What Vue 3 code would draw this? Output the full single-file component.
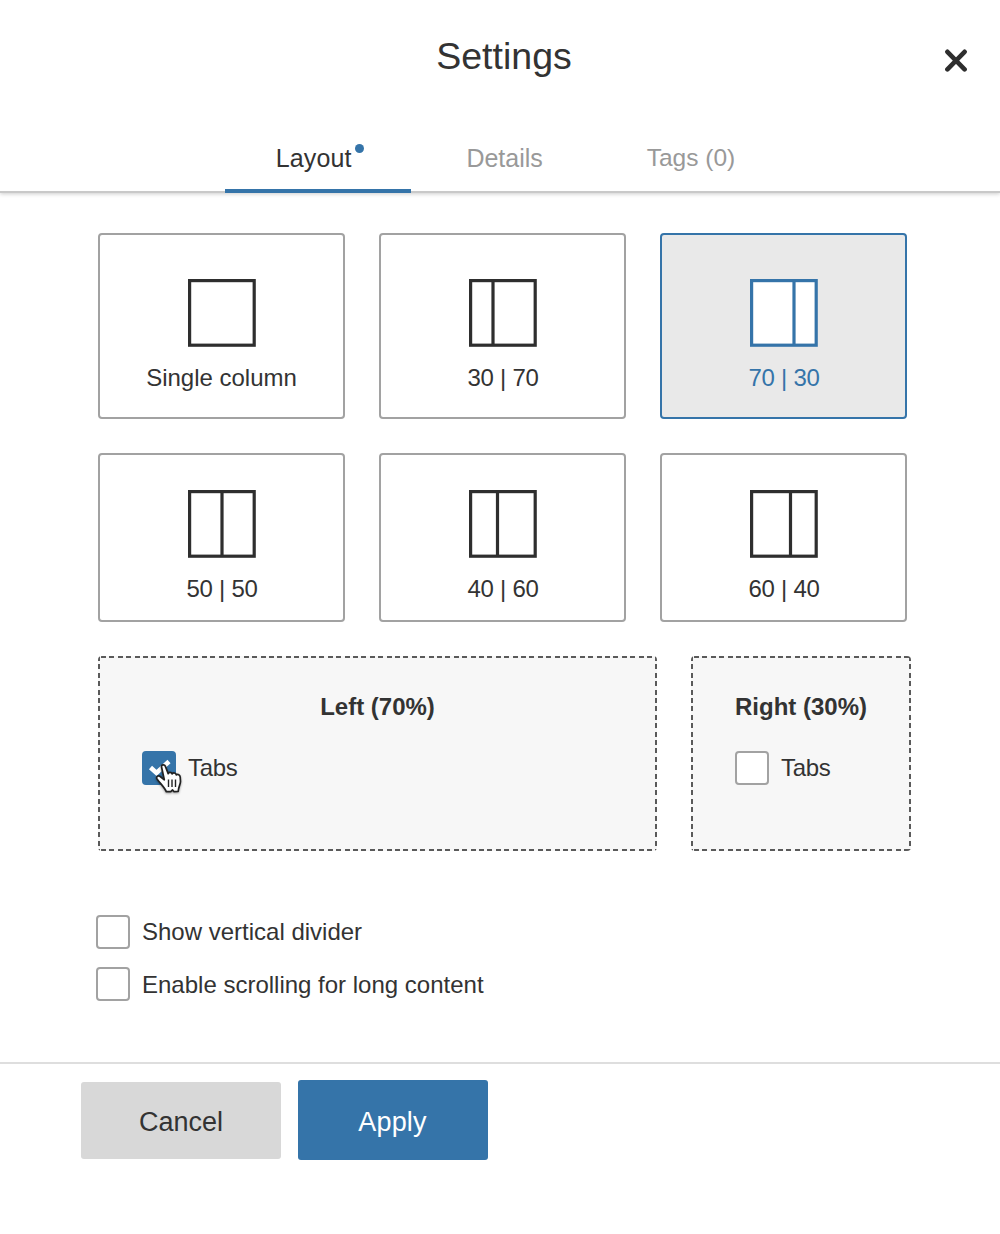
<script setup>
import { ref } from 'vue'

const tabs = ['Layout', 'Details', 'Tags (0)']
const activeTab = ref('Layout')

const layouts = [
  { label: 'Single column', divider: null },
  { label: '30 | 70', divider: 24 },
  { label: '70 | 30', divider: 44 },
  { label: '50 | 50', divider: 34 },
  { label: '40 | 60', divider: 28.5 },
  { label: '60 | 40', divider: 40.5 },
]
const selected = ref('70 | 30')

const leftTabs = ref(true)
const rightTabs = ref(false)
const verticalDivider = ref(false)
const scrolling = ref(false)
</script>

<template>
  <div class="dialog">
    <header class="header">
      <h1 class="title">Settings</h1>
      <button class="close" aria-label="Close">
        <svg width="24" height="24" viewBox="0 0 24 24">
          <path d="M3.4 2.8 20.6 20.4M20.6 2.8 3.4 20.4" stroke="#2e2e2e" stroke-width="4.6" stroke-linecap="round" stroke-linejoin="round" />
        </svg>
      </button>
      <nav class="tabs">
        <button
          v-for="tab in tabs"
          :key="tab"
          class="tab"
          :class="{ active: tab === activeTab }"
          @click="activeTab = tab"
        >
          <span class="tab-label">{{ tab }}<i v-if="tab === 'Layout'" class="dot"></i></span>
        </button>
      </nav>
    </header>

    <main class="body">
      <div class="grid">
        <button
          v-for="item in layouts"
          :key="item.label"
          class="card"
          :class="{ selected: item.label === selected }"
          @click="selected = item.label"
        >
          <svg class="glyph" width="68" height="68" viewBox="0 0 68 68">
            <rect x="1.6" y="1.6" width="64.6" height="64.6" fill="#fff" stroke="currentColor" stroke-width="3.2" />
            <path v-if="item.divider" :d="`M${item.divider} 2V66`" stroke="currentColor" stroke-width="3.2" />
          </svg>
          <span class="card-label" :class="{ ratio: item.divider }">{{ item.label }}</span>
        </button>
      </div>

      <div class="panels">
        <section class="panel left">
          <h2 class="panel-title">Left (70%)</h2>
          <label class="check">
            <span class="box-wrap">
              <input v-model="leftTabs" type="checkbox" class="box" />
              <svg v-if="leftTabs" class="tick" width="34" height="34" viewBox="0 0 34 34">
                <path d="M8.5 16.5 14.5 22 27 10.5" fill="none" stroke="#fff" stroke-width="4.6" />
              </svg>
              <svg class="pointer" width="32" height="36" viewBox="0 0 32 36">
                <path
                  d="M6.6 4.2C6 1.8 9.2.8 10.3 3.2L13.2 10.6C13.3 8.9 16.5 8.8 17.2 11C18 9.3 20.8 9.7 21.4 12C22.8 10.7 25 11.8 25.2 14L25.5 18.5C25.5 21.5 23.5 23.5 23.2 28.5L18.8 28.6 17.6 26.9 15.8 28.7 11.3 28.6C10 25.2 6.2 21.4 2.2 16.2C.6 14 3 11.9 5.2 13.5L9.3 16.8Z"
                  fill="#fff" stroke="#222" stroke-width="1.7" stroke-linejoin="round"
                />
                <path d="M13.5 16.5V24M17 16.5V24M20.5 16.5V24" stroke="#222" stroke-width="1.4" />
              </svg>
            </span>
            Tabs
          </label>
        </section>
        <section class="panel right">
          <h2 class="panel-title">Right (30%)</h2>
          <label class="check">
            <input v-model="rightTabs" type="checkbox" class="box" />
            Tabs
          </label>
        </section>
      </div>

      <div class="options">
        <label class="check">
          <input v-model="verticalDivider" type="checkbox" class="box" />
          Show vertical divider
        </label>
        <label class="check">
          <input v-model="scrolling" type="checkbox" class="box" />
          <span class="long">Enable scrolling for long content</span>
        </label>
      </div>
    </main>

    <footer class="footer">
      <button class="btn cancel">Cancel</button>
      <button class="btn apply">Apply</button>
    </footer>
  </div>
</template>

<style>
body {
  margin: 0;
  background: #fff;
}
</style>

<style scoped>
* {
  box-sizing: border-box;
}
.dialog {
  width: 1000px;
  height: 1234px;
  overflow: hidden;
  display: flex;
  flex-direction: column;
  background: #fff;
  color: #333;
  font: 24px/28px "Liberation Sans", Arial, sans-serif;
}
button {
  font: inherit;
  color: inherit;
  padding: 0;
  border: 0;
  background: none;
}
.header {
  position: relative;
  height: 193px;
  padding-top: 33px;
  display: flex;
  flex-direction: column;
  justify-content: space-between;
  border-bottom: 2px solid #c9c9c9;
  box-shadow: 0 1px 4px rgba(0, 0, 0, 0.2);
}
.title {
  margin: 0 0 0 8px;
  text-align: center;
  font-size: 37.5px;
  line-height: 46px;
  font-weight: 400;
}
.close {
  position: absolute;
  top: 49px;
  right: 32px;
  width: 24px;
  height: 24px;
}
.close svg {
  display: block;
}
.tabs {
  display: flex;
  margin: 0 0 -2px 225px;
}
.tab {
  width: 186.4px;
  height: 64px;
  padding-bottom: 3px;
  border-bottom: 4px solid transparent;
  color: #999;
  font-size: 25px;
}
.tab:last-child {
  font-size: 24.5px;
}
.tab.active {
  color: #333;
  border-bottom-color: #3574a9;
}
.tab.active .tab-label {
  margin-right: 9px;
  letter-spacing: 0.15px;
}
.tab-label {
  position: relative;
}
.dot {
  position: absolute;
  right: -12px;
  top: 0;
  width: 9px;
  height: 9px;
  border-radius: 50%;
  background: #3574a9;
}
.body {
  flex: none;
  height: 869px;
  padding: 40px 89px 0 98px;
}
.grid {
  display: grid;
  grid-template-columns: repeat(3, 247px);
  grid-template-rows: 186px 169px;
  gap: 34px;
}
.card {
  display: flex;
  flex-direction: column;
  align-items: center;
  justify-content: flex-start;
  padding-top: 44px;
  border: 2px solid #a2a2a2;
  border-radius: 4px;
  background: #fff;
}
.card:nth-child(n + 4) {
  padding-top: 35px;
}
.card.selected {
  color: #3574a9;
  border-color: #3574a9;
  background: #e9e9e9;
}
.glyph {
  display: block;
  color: #2e2e2e;
}
.selected .glyph {
  color: inherit;
}
.card-label {
  margin-top: 17px;
}
.ratio {
  letter-spacing: -0.25px;
  margin-left: 1px;
}
.panels {
  display: flex;
  gap: 34px;
  margin-top: 34px;
}
.panel {
  --dash: #5a5a5a 0 5px, transparent 5px 8.4px;
  height: 195px;
  padding: 37px 44px 0;
  border-radius: 4px;
  background:
    repeating-linear-gradient(90deg, var(--dash)) 3px 0 / 100% 2px no-repeat,
    repeating-linear-gradient(90deg, var(--dash)) 3px 100% / 100% 2px no-repeat,
    repeating-linear-gradient(180deg, var(--dash)) 0 0 / 2px 100% no-repeat,
    repeating-linear-gradient(180deg, var(--dash)) 100% 0 / 2px 100% no-repeat,
    #f7f7f7;
}
.panel .check {
  letter-spacing: -0.3px;
}
.left {
  width: 559px;
}
.right {
  width: 220px;
}
.panel-title {
  margin: 0 -20px 30px;
  text-align: center;
  font-size: 24px;
  line-height: 28px;
  font-weight: 700;
}
.check {
  display: flex;
  align-items: center;
  gap: 12px;
  height: 34px;
}
.box-wrap {
  position: relative;
  width: 34px;
  height: 34px;
}
.box {
  appearance: none;
  display: block;
  flex: none;
  width: 34px;
  height: 34px;
  margin: 0;
  border: 2px solid #a2a2a2;
  border-radius: 4px;
  background: #fff;
}
.box:checked {
  border-color: #3574a9;
  background: #3574a9;
}
.tick {
  position: absolute;
  left: 0;
  top: 0;
}
.pointer {
  position: absolute;
  left: 13px;
  top: 12px;
  filter: drop-shadow(0 1px 1px rgba(0, 0, 0, 0.35));
}
.options {
  display: flex;
  flex-direction: column;
  gap: 18px;
  margin: 64px 0 0 -2px;
}
.long {
  padding-top: 2px;
}
.footer {
  flex: 1;
  display: flex;
  align-items: flex-start;
  gap: 17px;
  padding: 16px 0 0 81px;
  border-top: 2px solid #dedede;
}
.btn {
  font-size: 27px;
  border-radius: 3px;
}
.cancel {
  width: 200px;
  height: 77px;
  margin-top: 2px;
  padding-top: 2px;
  background: #d8d8d8;
}
.apply {
  width: 190px;
  height: 80px;
  padding-top: 3px;
  padding-right: 1px;
  background: #3574a9;
  color: #fff;
  letter-spacing: 0.2px;
}
</style>
